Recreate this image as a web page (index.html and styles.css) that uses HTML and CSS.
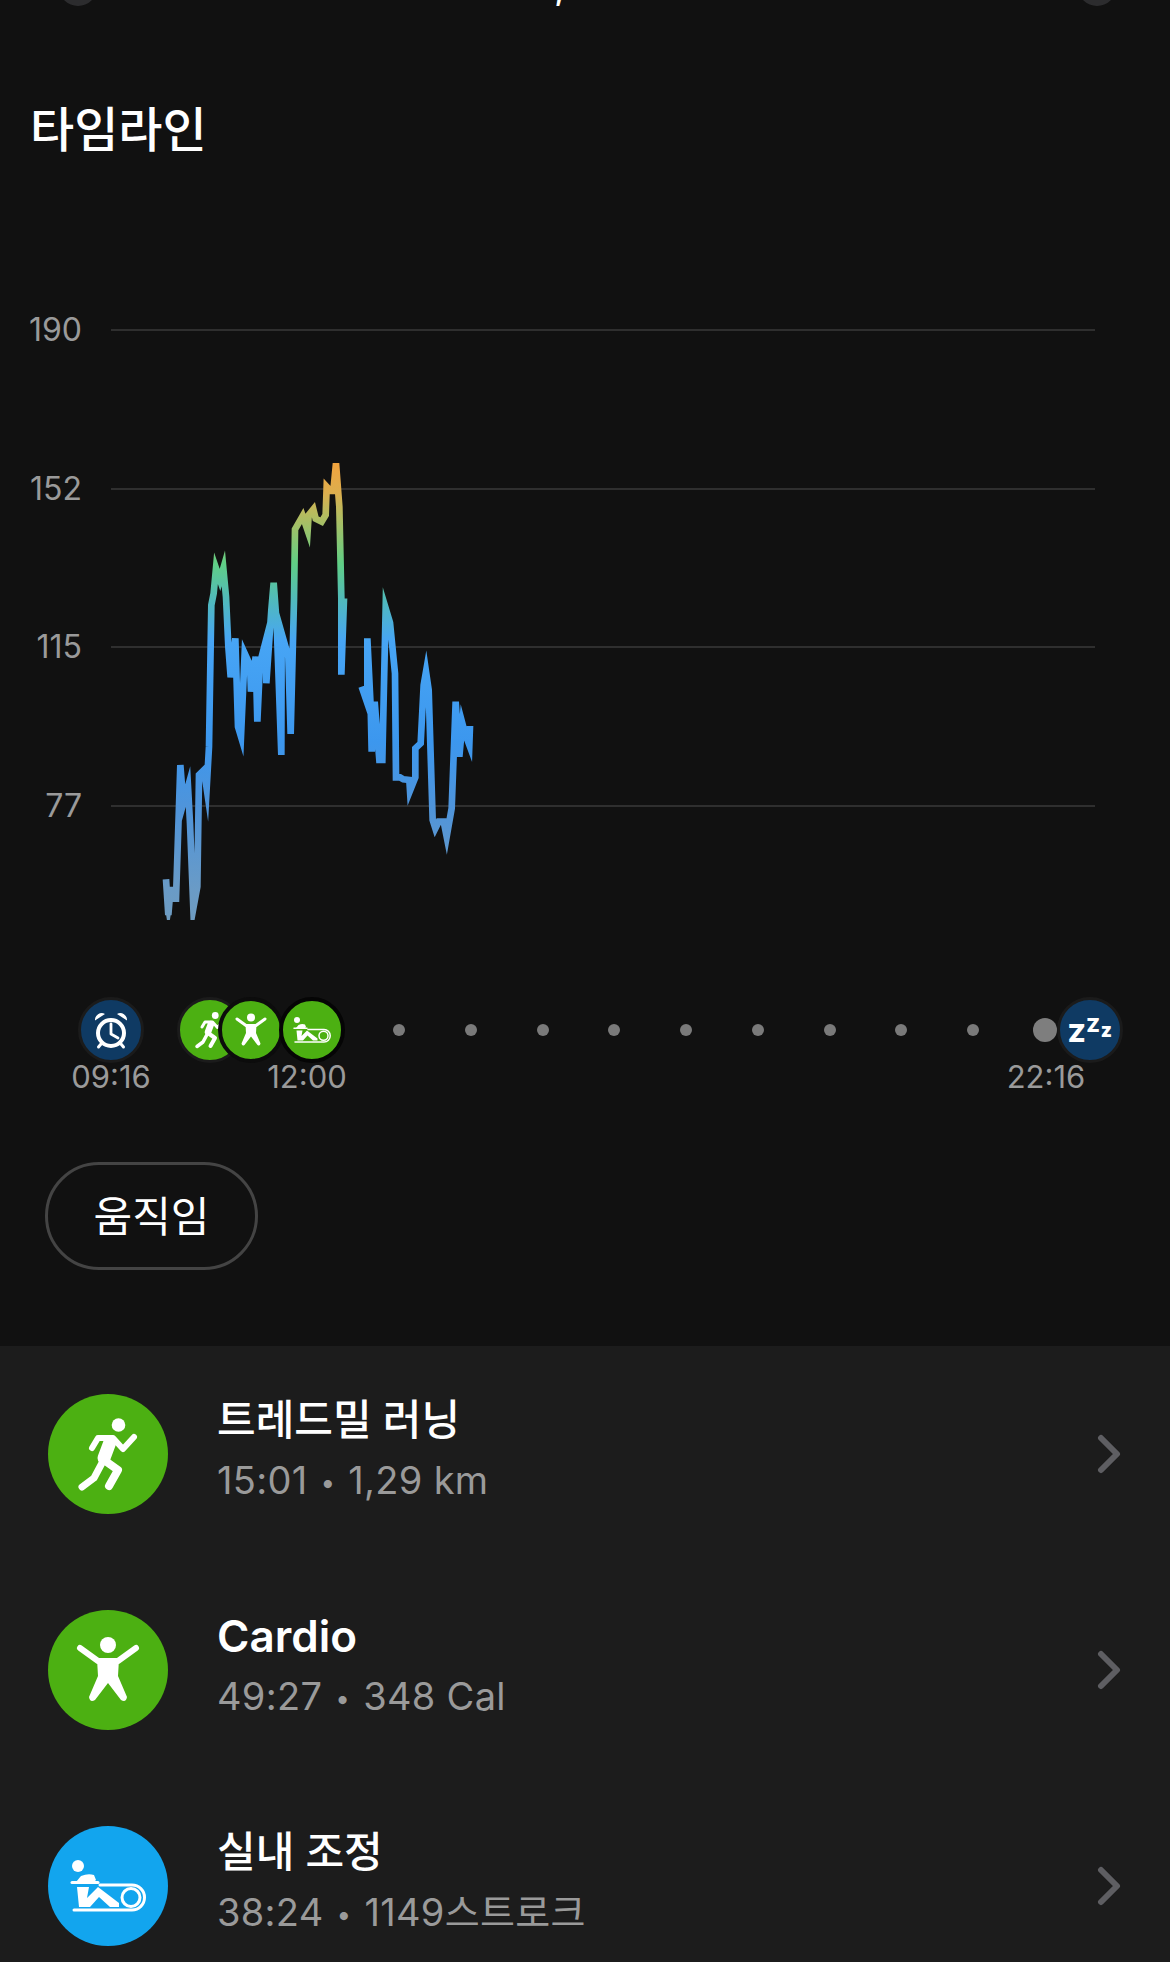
FILE: index.html
```html
<!DOCTYPE html>
<html lang="ko">
<head>
<meta charset="utf-8">
<title>타임라인</title>
<link rel="stylesheet" href="styles.css">
</head>
<body>
<svg class="defs" width="0" height="0" aria-hidden="true">
  <defs>
    <linearGradient id="hr" gradientUnits="userSpaceOnUse" x1="0" y1="60" x2="0" y2="1470">
      <stop offset="0" stop-color="#f5a33c"/>
      <stop offset="0.07" stop-color="#dcae4e"/>
      <stop offset="0.113" stop-color="#b8bb5e"/>
      <stop offset="0.22" stop-color="#60cf85"/>
      <stop offset="0.30" stop-color="#50b9bd"/>
      <stop offset="0.385" stop-color="#47a5f5"/>
      <stop offset="0.6" stop-color="#3c97ee"/>
      <stop offset="0.74" stop-color="#4f94da"/>
      <stop offset="0.915" stop-color="#6a9bc6"/>
      <stop offset="1" stop-color="#6f9cc0"/>
    </linearGradient>
    <symbol id="i-run" viewBox="0 0 120 120">
      <circle cx="70.5" cy="31" r="6.8" fill="#fff"/>
      <g fill="none" stroke="#fff" stroke-linecap="round" stroke-linejoin="round">
        <polyline stroke-width="6" points="44,54 50,44 65,44 75,55 86,43"/>
        <polyline stroke-width="13" points="62,48 56,64"/>
        <polyline stroke-width="7" points="54,69 46,84 34,93"/>
        <polyline stroke-width="8" points="56,66 70,76 61,92"/>
      </g>
    </symbol>
    <symbol id="i-cardio" viewBox="0 0 120 120">
      <circle cx="60" cy="35" r="8" fill="#fff"/>
      <polyline points="32,38 50,51 70,51 88,38" fill="none" stroke="#fff" stroke-width="6" stroke-linecap="round" stroke-linejoin="round"/>
      <path d="M49 49 L71 49 L70 66 L79 87 Q78 93 73 90 L60 73 L47 90 Q42 93 41 87 L50 66 Z" fill="#fff"/>
    </symbol>
    <symbol id="i-row" viewBox="0 0 120 120">
      <circle cx="30" cy="40" r="6" fill="#fff"/>
      <path d="M28 56 L33 50 Q40 47 46 49 L48 54 L46 56 Z" fill="#fff"/>
      <line x1="24" y1="56.5" x2="50" y2="56.5" stroke="#fff" stroke-width="3" stroke-linecap="round"/>
      <path d="M29 61 H41 L39 72 L50 61 L71 77 V81 H62 L51 71 L42 81 H31 Z" fill="#fff"/>
      <path d="M52 59 H84 A12.5 12.5 0 0 1 84 84 H26" fill="none" stroke="#fff" stroke-width="3" stroke-linecap="round"/>
      <circle cx="83" cy="71.5" r="9" fill="none" stroke="#fff" stroke-width="3"/>
    </symbol>
    <symbol id="i-clock" viewBox="0 0 60 60">
      <circle cx="30" cy="33" r="13" fill="none" stroke="#fff" stroke-width="4"/>
      <polyline points="30,24 30,34 37,38" fill="none" stroke="#fff" stroke-width="2.8" stroke-linecap="round" stroke-linejoin="round"/>
      <path d="M14 20.5 A6.8 6.8 0 0 1 24 14 Z M46 20.5 A6.8 6.8 0 0 0 36 14 Z" fill="#fff"/>
      <path d="M20 44 L17.5 47 M40 44 L42.5 47" stroke="#fff" stroke-width="3" stroke-linecap="round"/>
    </symbol>
    <symbol id="i-chev" viewBox="0 0 24 40">
      <polyline points="4,4 20,20 4,36" fill="none" stroke="#5e5e62" stroke-width="6" stroke-linecap="round" stroke-linejoin="round"/>
    </symbol>
  </defs>
</svg>

<div class="page">
  <div class="peek">
    <span class="peek-btn"></span>
    <span class="peek-date">,</span>
    <span class="peek-btn"></span>
  </div>

  <h1 class="title">타임라인</h1>

  <svg class="chart" viewBox="0 0 1170 630" width="1170" height="630" role="img" aria-label="심박수 차트">
    <g class="grid">
      <line x1="111" x2="1095" y1="40" y2="40"/>
      <line x1="111" x2="1095" y1="199" y2="199"/>
      <line x1="111" x2="1095" y1="357" y2="357"/>
      <line x1="111" x2="1095" y1="516" y2="516"/>
    </g>
    <g class="axis">
      <text x="82" y="51">190</text>
      <text x="82" y="210">152</text>
      <text x="82" y="368">115</text>
      <text x="82" y="527">77</text>
    </g>
    <g transform="translate(140 150) scale(.3333333)">
      <polygon class="hr-tip" points="75,1400 96,1400 85,1470"/>
      <g class="hr-line">
        <polyline points="78,1318 85,1425 92,1340 92,1376 108,1376 121,975 130,1090 144,1040 150,1150 160,1405 172,1340 177,1005 192,990 200,1045 207,920 214,495 221,460 228,385 240,420 250,385 258,470 265,620 272,712 286,595 294,860 303,890 314,640 330,675 333,755 347,650 352,845 360,670 378,600 379,730 394,510 401,428 410,550 424,945 425,580 445,650 452,882 462,480 465,268 488,228 503,272 506,225 520,208 527,236 545,245 557,225 560,140 572,153 580,153 588,70 598,200 604,475 604,704 612,475"/>
        <polyline points="665,740 682,790 682,595 692,800 695,935 704,785 718,960 727,960 737,505 750,548 765,700 768,1012 780,1012 790,1018 808,1020 810,1052 826,1012 826,925 842,910 851,735 858,695 866,750 878,1140 886,1165 896,1145 911,1145 920,1190 935,1105 947,785 958,950 967,850 975,880 988,915 990,858"/>
      </g>
    </g>
  </svg>

  <div class="track">
    <span class="mark mark-night"><svg class="mark-ico"><use href="#i-clock"/></svg></span>
    <span class="mark mark-green mark-run"><svg class="mark-ico"><use href="#i-run"/></svg></span>
    <span class="mark mark-green mark-card"><svg class="mark-ico"><use href="#i-cardio"/></svg></span>
    <span class="mark mark-green mark-rowing"><svg class="mark-ico"><use href="#i-row"/></svg></span>
    <div class="dots">
      <span class="dot"></span><span class="dot"></span><span class="dot"></span>
      <span class="dot"></span><span class="dot"></span><span class="dot"></span>
      <span class="dot"></span><span class="dot"></span><span class="dot"></span>
    </div>
    <span class="dot-big"></span>
    <span class="mark mark-night mark-sleep"><span class="z1">Z</span><span class="z2">Z</span><span class="z3">z</span></span>
  </div>
  <div class="times">
    <span class="time">09:16</span>
    <span class="time time-b">12:00</span>
    <span class="time time-c">22:16</span>
  </div>

  <div class="pill-wrap"><span class="pill">움직임</span></div>

  <section class="list">
    <div class="row">
      <span class="badge badge-green"><svg class="badge-ico"><use href="#i-run"/></svg></span>
      <div class="row-text">
        <div class="row-title">트레드밀 러닝</div>
        <div class="row-sub">15:01 <i class="sep">•</i> 1,29 km</div>
      </div>
      <svg class="chev"><use href="#i-chev"/></svg>
    </div>
    <div class="row">
      <span class="badge badge-green"><svg class="badge-ico"><use href="#i-cardio"/></svg></span>
      <div class="row-text">
        <div class="row-title row-title-latin">Cardio</div>
        <div class="row-sub">49:27 <i class="sep">•</i> 348 Cal</div>
      </div>
      <svg class="chev"><use href="#i-chev"/></svg>
    </div>
    <div class="row">
      <span class="badge badge-blue"><svg class="badge-ico"><use href="#i-row"/></svg></span>
      <div class="row-text">
        <div class="row-title">실내 조정</div>
        <div class="row-sub">38:24 <i class="sep">•</i> 1149스트로크</div>
      </div>
      <svg class="chev"><use href="#i-chev"/></svg>
    </div>
  </section>
</div>
</body>
</html>
```
FILE: styles.css
```css
* { box-sizing: border-box; }
html, body { margin: 0; padding: 0; background: #111111; }
body { font-family: Inter, "Noto Sans CJK KR", "Noto Sans", sans-serif; }
.defs { display: block; height: 0; }
.page { width: 1170px; height: 1962px; overflow: hidden; background: #111111; color: #fff; }

.peek { height: 6px; overflow: hidden; display: flex; justify-content: space-between; padding: 0 54px 0 59px; }
.peek-btn { width: 38px; height: 38px; border-radius: 50%; background: #2c2c2e; margin-top: -32px; flex: none; }
.peek-date { font-size: 40px; line-height: 48px; margin: -38px 56px 0 0; color: #fff; }

.title { margin: 92px 0 0 30px; font-size: 48px; line-height: 64px; font-weight: 500; color: #fff; }

.chart { display: block; margin-top: 128px; }
.grid line { stroke: #3a3a3a; stroke-width: 1.5; }
.axis text { font-family: Inter, sans-serif; font-size: 32px; fill: #9a9a9a; text-anchor: end; }
.hr-line polyline { fill: none; stroke: url(#hr); stroke-width: 20; stroke-linejoin: miter; stroke-miterlimit: 10; stroke-linecap: butt; }
.hr-tip { fill: #6f9cc0; }

.track { display: flex; align-items: center; height: 66px; margin-top: 77px; padding-left: 78px; }
.mark { width: 66px; height: 66px; flex: none; border-radius: 50%; border: 3px solid #1b1b1b; display: flex; align-items: center; justify-content: center; }
.mark-night { background: #0f3a63; }
.mark-green { background: #4cb012; }
.mark-run { margin-left: 33px; }
.mark-card { margin-left: -25px; border-color: #0c0c0c; border-width: 4px; }
.mark-rowing { margin-left: -5px; border-color: #050505; border-width: 4px; }
.mark-ico { width: 60px; height: 60px; flex: none; }
.dots { display: flex; gap: 59.75px; margin-left: 48px; }
.dot { width: 12px; height: 12px; border-radius: 50%; background: #7a7a7a; flex: none; }
.dot-big { width: 24px; height: 24px; border-radius: 50%; background: #7e7e7e; margin-left: 54px; flex: none; }
.mark-sleep { color: #fff; font-family: Inter, sans-serif; font-weight: 900; padding-top: 2px; }
.z1 { font-size: 25px; line-height: 24px; margin-top: 4px; }
.z2 { font-size: 19px; line-height: 19px; margin: -12px 0 0 1px; }
.z3 { font-size: 19px; line-height: 19px; margin: -2px 0 0 1px; }

.times { display: flex; margin-top: -4px; padding-left: 61px; }
.time { width: 100px; text-align: center; font-size: 31px; line-height: 36px; color: #9a9a9a; flex: none; }
.time-b { margin-left: 96px; }
.time-c { margin-left: 639px; }

.pill-wrap { margin-top: 67px; padding-left: 45px; }
.pill { display: inline-flex; align-items: center; justify-content: center; width: 213px; height: 108px; padding-bottom: 5px; border: 3px solid #444444; border-radius: 54px; font-size: 42px; color: #fff; }

.list { margin-top: 76px; background: #1c1c1c; height: 620px; padding-top: 48px; }
.row { display: flex; align-items: center; height: 120px; margin-bottom: 96px; padding: 0 49px 0 48px; }
.badge { width: 120px; height: 120px; border-radius: 50%; display: flex; flex: none; }
.badge-green { background: #4cb012; }
.badge-blue { background: #12a5ee; }
.badge-ico { width: 120px; height: 120px; }
.row-text { margin-left: 49px; flex: 1; }
.row-title { font-size: 42px; line-height: 54px; font-weight: 500; color: #fff; margin-top: -6px; }
.row-title-latin { font-size: 44px; font-weight: 600; }
.row-sub { font-size: 38px; line-height: 48px; letter-spacing: .3px; color: #9a9a9a; margin-top: 9px; }
.sep { font-style: normal; font-size: 26px; position: relative; top: -2px; margin: 0 2px; }
.chev { width: 24px; height: 40px; flex: none; }
```
